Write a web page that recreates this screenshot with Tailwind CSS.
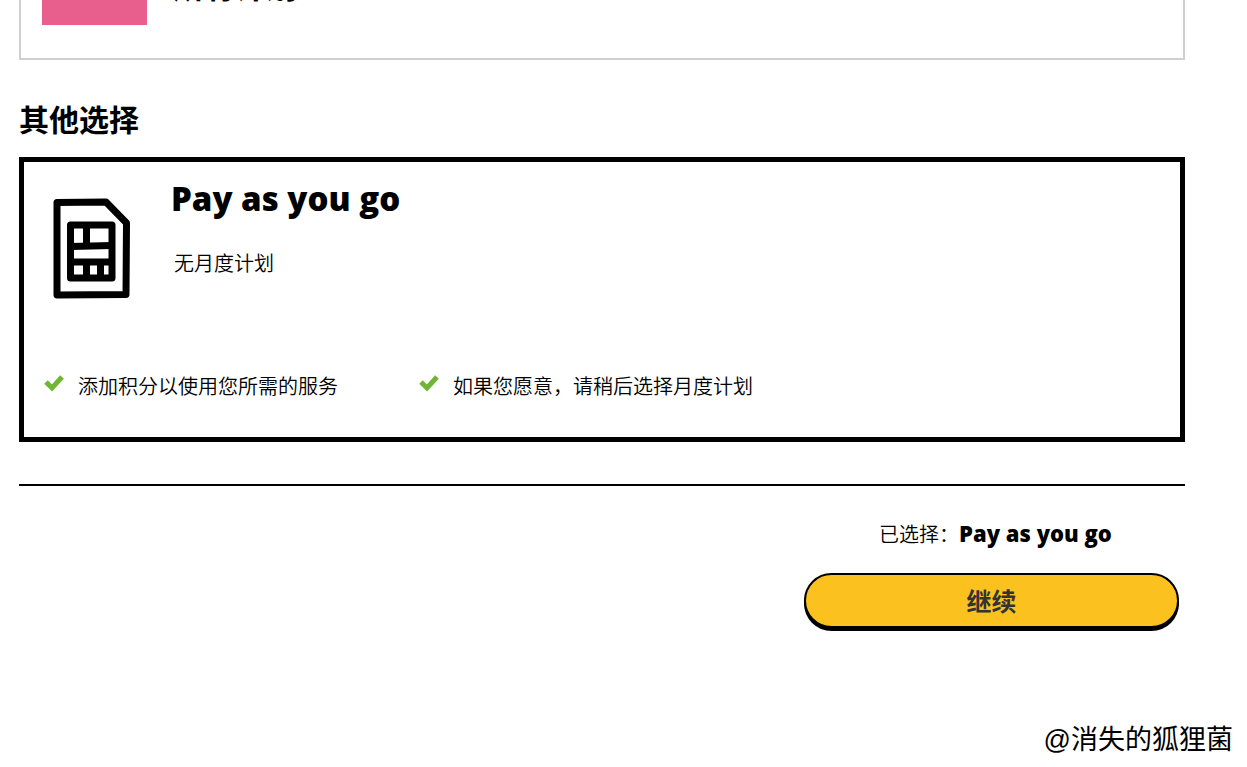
<!DOCTYPE html>
<html lang="zh-CN">
<head>
    <meta charset="UTF-8">
    <meta name="viewport" content="width=device-width, initial-scale=1.0">
    <title>选择计划</title>
    <script src="https://cdn.jsdelivr.net/npm/@tailwindcss/browser@4"></script>
</head>
<body class="min-h-screen bg-white text-black font-['Noto_Sans_CJK_SC',sans-serif]">
    <main class="pl-[19px] pr-[62px]">
        <!-- Monthly plan, scrolled mostly out of view -->
        <section class="flex h-[60px] items-start gap-[26px] border-2 border-t-0 border-[#cfcfcf] pl-[21px]">
            <div class="h-[25px] w-[105px] bg-[#e85f8e]"></div>
            <h2 class="-mt-[35px] text-[31px] leading-[40px] font-bold">所有计划</h2>
        </section>

        <h2 class="mt-[36px] text-[30px] leading-[44px] font-bold">其他选择</h2>

        <section class="mt-[17px] border-[5px] border-black px-5 pt-[15px] pb-[36px]">
            <div class="flex gap-[40px]">
                <svg class="mt-[21px] ml-[9px] h-[102px] w-[78px] shrink-0" viewBox="0 0 78 102" fill="none" stroke="#000" stroke-linejoin="round" aria-hidden="true">
                    <path stroke-width="7" d="M4 4.500 53 4 73.500 25 73 96.500 4 97Z"/>
                    <path stroke-width="7" d="M17.500 27H59V80H17.500Z"/>
                    <path stroke-width="7" d="M18 48.500 59 47.500M18 64H59M33.500 27V48M33.500 64V80M47.500 64V80"/>
                </svg>
                <div>
                    <h3 class="font-['Open_Sans',sans-serif] text-[33px] leading-[44px] font-extrabold">Pay as you go</h3>
                    <p class="mt-[27px] ml-[3px] text-[20px] leading-[30px] font-[350]">无月度计划</p>
                </div>
            </div>
            <ul class="mt-[71px] flex text-[20px] leading-[30px] font-[350]">
                <li class="flex w-[375px] gap-[14px]">
                    <svg class="mt-[3px] h-[18px] w-5 shrink-0" viewBox="0 0 20 18" aria-hidden="true"><path fill="none" stroke="#70b536" stroke-width="5" d="M2 8 8 14 18 3"/></svg>
                    <span>添加积分以使用您所需的服务</span>
                </li>
                <li class="flex gap-[14px]">
                    <svg class="mt-[3px] h-[18px] w-5 shrink-0" viewBox="0 0 20 18" aria-hidden="true"><path fill="none" stroke="#70b536" stroke-width="5" d="M2 8 8 14 18 3"/></svg>
                    <span>如果您愿意，请稍后选择月度计划</span>
                </li>
            </ul>
        </section>

        <hr class="mt-[42px] border-t-2 border-black">

        <div class="mt-[32px] mr-[6px] ml-auto w-[375px]">
            <p class="pl-[8px] text-center text-[20px] leading-[30px] font-[350]">已选择：<strong class="font-['Open_Sans',sans-serif] text-[22px] font-extrabold">Pay as you go</strong></p>
            <button type="button" class="mt-6 h-[55px] w-full rounded-full border-2 border-black bg-[#fbc21f] text-[25px] font-bold text-[#333] shadow-[0_3px_0_#000]">继续</button>
        </div>
    </main>
    <footer class="mt-[92px] pr-[14px] text-right font-['Liberation_Sans','Noto_Sans_CJK_SC',sans-serif] text-[27px] leading-[40px]">@消失的狐狸菌</footer>
</body>
</html>
